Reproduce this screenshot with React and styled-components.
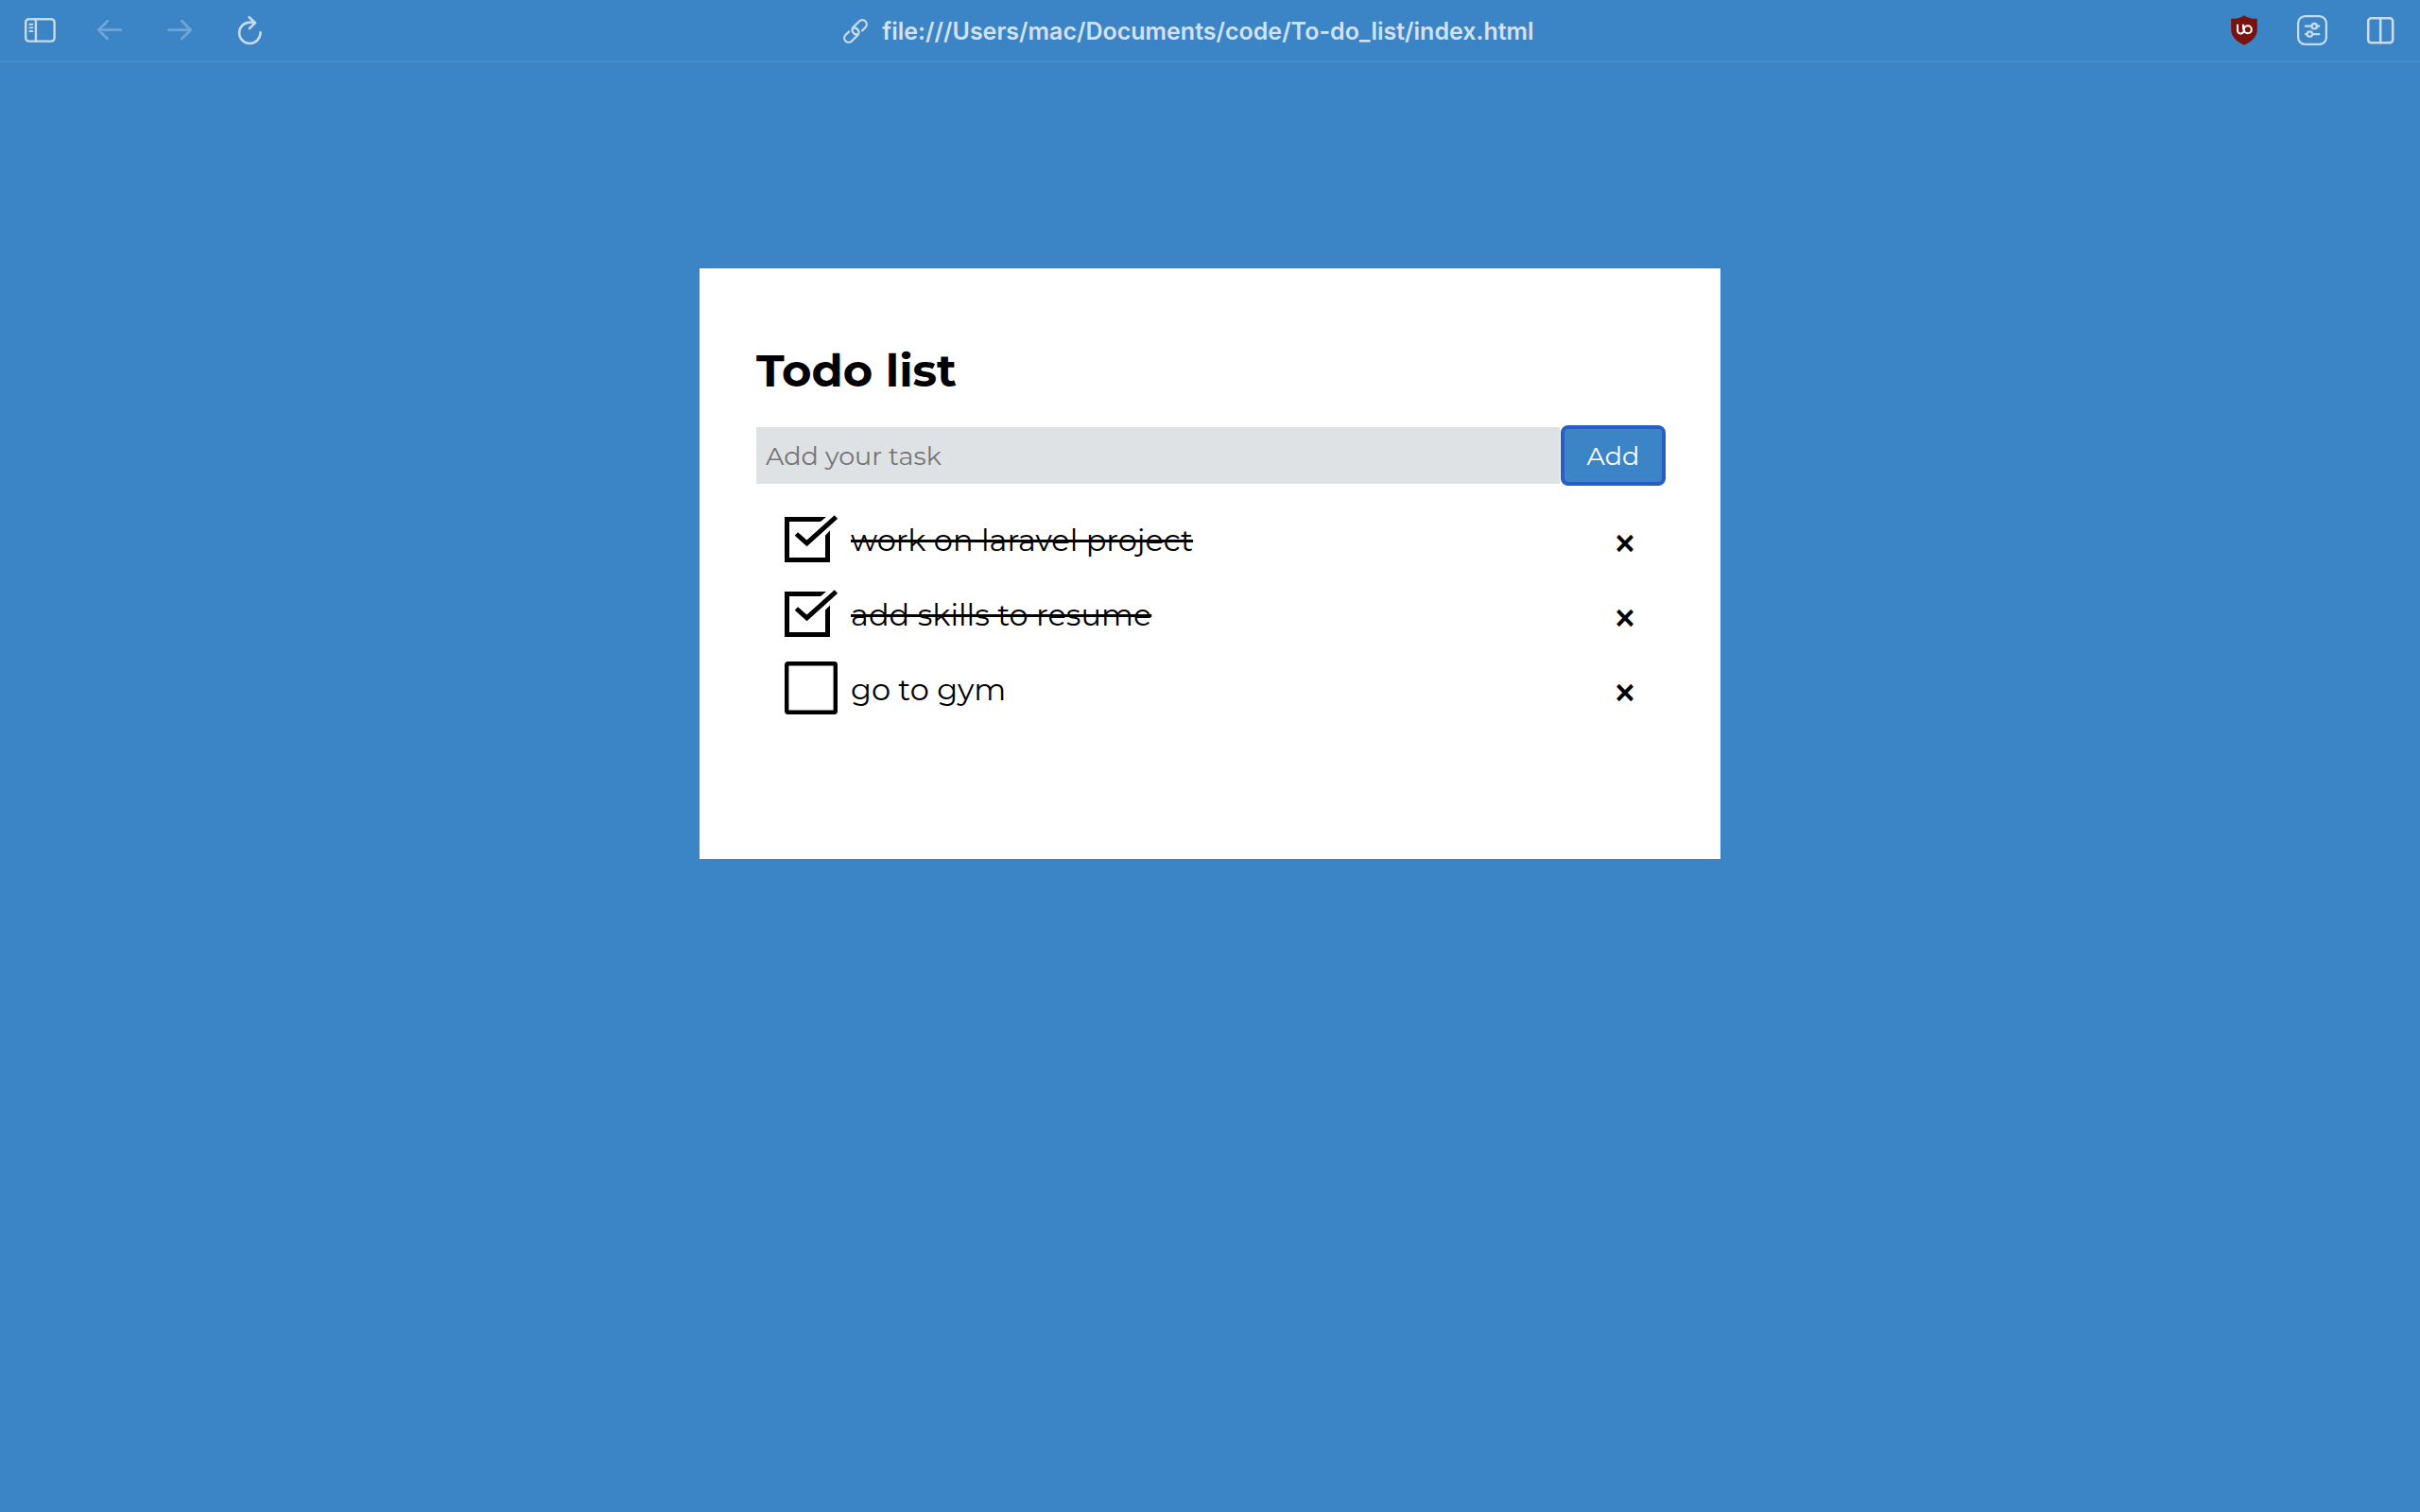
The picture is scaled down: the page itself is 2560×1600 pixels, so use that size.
import React, { useState } from "react";
import styled, { createGlobalStyle } from "styled-components";

const blue = "#3b85c6";

const GlobalStyle = createGlobalStyle`
  * { box-sizing: border-box; }
  body {
    margin: 0;
    background: ${blue};
    font-family: Montserrat, Inter, "Open Sans", sans-serif;
    color: #000;
  }
  button, input { font: inherit; color: inherit; }
`;

const Toolbar = styled.header`
  display: grid;
  grid-template-columns: 1fr auto 1fr;
  align-items: center;
  height: 66px;
  padding: 0 18px;
  border-bottom: 2px solid #478bc8;
  color: #c6dbee;
`;

const ToolGroup = styled.div`
  display: flex;
  gap: ${(p) => p.$gap}px;
  justify-content: ${(p) => (p.$end ? "flex-end" : "flex-start")};
`;

const ToolButton = styled.button`
  width: 48px;
  height: 48px;
  padding: 0;
  border: 0;
  background: none;
  color: ${(p) => (p.disabled ? "#6ea4d6" : "#c6dbee")};

  svg { display: block; }
`;

const Address = styled.button`
  display: flex;
  align-items: center;
  gap: 14px;
  padding: 2px 46px 0 0;
  border: 0;
  background: none;
  color: #d3e2f2;
  font-family: Inter, "Liberation Sans", sans-serif;
  font-size: 25px;
  font-weight: 600;
  line-height: 32px;
  white-space: nowrap;
`;

const Page = styled.main`
  padding: 218px 24px 80px;
`;

const Card = styled.section`
  max-width: 1080px;
  margin: 0 auto;
  padding: 80px 60px 142px;
  background: #fff;
`;

const Title = styled.h1`
  margin: 0 0 32px;
  font-size: 48px;
  font-weight: 700;
  line-height: 56px;
`;

const TaskForm = styled.form`
  display: flex;
  gap: 3px;
  margin-bottom: 18px;
`;

const TaskInput = styled.input`
  flex: 1;
  min-width: 0;
  height: 60px;
  padding: 0 10px;
  border: 0;
  border-radius: 0;
  outline: 0;
  background: #dee2e5;
  font-size: 27px;

  &::placeholder { color: #757575; opacity: 1; }
`;

const AddButton = styled.button`
  width: 107px;
  height: 60px;
  padding: 0;
  border: 0;
  border-radius: 6px;
  outline: 4px solid #285cc7;
  outline-offset: -2px;
  background: ${blue};
  color: #fff;
  font-size: 27px;
`;

const TaskList = styled.ul`
  margin: 0;
  padding: 0 24px 0 30px;
  list-style: none;
`;

const TaskRow = styled.li`
  display: flex;
  align-items: center;
  justify-content: space-between;
  padding: 12px 0 11px;
`;

const TaskLabel = styled.label`
  display: flex;
  align-items: center;
  gap: 14px;
  font-size: 32px;
  line-height: 40px;
`;

const TickBox = styled.span`
  display: grid;

  input, svg { grid-area: 1 / 1; display: block; }
  input {
    appearance: none;
    width: 56px;
    height: 56px;
    margin: 0;
  }
  svg { pointer-events: none; }
`;

const TaskText = styled.span`
  padding-top: 4px;
  text-decoration: ${(p) => (p.$done ? "line-through 3px" : "none")};
  text-decoration-skip-ink: none;
`;

const DeleteButton = styled.button`
  width: 34px;
  padding: 10px 0 0;
  border: 0;
  background: none;
  font-size: 48px;
  font-weight: 500;
  line-height: 40px;
`;

function Icon({ children, width = 2.4 }) {
  return (
    <svg width="48" height="48" viewBox="0 0 48 48" fill="none" stroke="currentColor"
      strokeWidth={width} strokeLinecap="round" strokeLinejoin="round" aria-hidden="true">
      {children}
    </svg>
  );
}

const SidebarIcon = () => (
  <Icon width={2.4}>
    <rect x="9.2" y="12.2" width="30.4" height="23.4" rx="3.4" />
    <path d="M19.9 12.2V35.6" />
    <path d="M13.4 17.7H16.4M13.4 21.4H16.4M13.4 25H16.4" strokeWidth="1.9" />
  </Icon>
);
const BackIcon = () => (
  <Icon width={2.8}><path d="M35.6 23.7H12.3M21.7 14.2L12.3 23.7L21.7 33" /></Icon>
);
const ForwardIcon = () => (
  <Icon width={2.8}><path d="M12.4 23.7H35.7M26.3 14.2L35.7 23.7L26.3 33" /></Icon>
);
const ReloadIcon = () => (
  <Icon width={2.6}>
    <path d="M35.5 26.4A11.2 11.2 0 1 1 24.3 15.6C26.5 15.5 28.4 15.7 29.8 16.1" />
    <path d="M23.6 10.2L29.9 16.1L23.9 22.2" />
  </Icon>
);
const ShieldIcon = () => (
  <Icon width={2}>
    <path d="M24 8.2C20.2 11 15.4 12 10.2 11.8V23C10.2 31.4 16.2 36 24 39.8C31.8 36 37.8 31.4 37.8 23V11.8C32.6 12 27.8 11 24 8.2Z" fill="#7a130f" stroke="none" />
    <g stroke="#fff" strokeLinecap="butt">
      <path d="M17 17.8V23.6A3.3 3.4 0 0 0 23.6 24.6" />
      <path d="M23 17.8V23.4" />
      <circle cx="27.8" cy="23.2" r="4" />
    </g>
  </Icon>
);
const SettingsIcon = () => (
  <Icon width={2.3}>
    <rect x="9.1" y="9.1" width="29.8" height="29.8" rx="7.4" />
    <circle cx="26.3" cy="19.7" r="2.7" />
    <circle cx="21.4" cy="28.1" r="2.7" />
    <path d="M16.9 19.7H23.6M29 19.7H31.3M16.9 28.1H18.7M24.1 28.1H31.3" />
  </Icon>
);
const SplitIcon = () => (
  <Icon width={2.6}>
    <rect x="11.2" y="11.2" width="26" height="26" rx="3.2" />
    <path d="M24.2 11.2V37.2" />
  </Icon>
);
const LinkIcon = () => (
  <svg width="28" height="28" viewBox="-14 -14 28 28" fill="none" stroke="#c6dbee"
    strokeWidth="2.3" strokeLinecap="round" aria-hidden="true">
    <g transform="rotate(-45)">
      <path d="M5.4 4.6H10.2A4.6 4.6 0 0 0 10.2 -4.6H1.6A4.6 4.6 0 0 0 -0.6 4" />
      <path d="M-5.4 -4.6H-10.2A4.6 4.6 0 0 0 -10.2 4.6H-1.6A4.6 4.6 0 0 0 0.6 -4" />
    </g>
  </svg>
);

function BoxDrawing({ done }) {
  return (
    <svg width="56" height="56" viewBox="0 0 56 56" fill="none" aria-hidden="true">
      {done ? (
        <>
          <path d="M0 5H44L38 10H5V48H43V24.5L48 19.5V53H0Z" fill="#000" />
          <path d="M12.4 23L23.5 32.8L54.4 5" stroke="#000" strokeWidth="5" />
        </>
      ) : (
        <rect x="2.2" y="2.2" width="51.6" height="51.6" rx="1.2" stroke="#000" strokeWidth="4.4" />
      )}
    </svg>
  );
}

const initialTasks = [
  { id: 1, text: "work on laravel project", done: true },
  { id: 2, text: "add skills to resume", done: true },
  { id: 3, text: "go to gym", done: false },
];

export default function App() {
  const [tasks, setTasks] = useState(initialTasks);
  const [draft, setDraft] = useState("");

  const addTask = (event) => {
    event.preventDefault();
    if (!draft.trim()) return;
    setTasks([...tasks, { id: Date.now(), text: draft.trim(), done: false }]);
    setDraft("");
  };
  const toggle = (id) =>
    setTasks(tasks.map((t) => (t.id === id ? { ...t, done: !t.done } : t)));
  const remove = (id) => setTasks(tasks.filter((t) => t.id !== id));

  return (
    <>
      <GlobalStyle />
      <Toolbar>
        <ToolGroup $gap={26}>
          <ToolButton aria-label="Sidebar"><SidebarIcon /></ToolButton>
          <ToolButton aria-label="Back" disabled><BackIcon /></ToolButton>
          <ToolButton aria-label="Forward" disabled><ForwardIcon /></ToolButton>
          <ToolButton aria-label="Reload"><ReloadIcon /></ToolButton>
        </ToolGroup>
        <Address>
          <LinkIcon />
          file:///Users/mac/Documents/code/To-do_list/index.html
        </Address>
        <ToolGroup $gap={24} $end>
          <ToolButton aria-label="Content blocker"><ShieldIcon /></ToolButton>
          <ToolButton aria-label="Page settings"><SettingsIcon /></ToolButton>
          <ToolButton aria-label="Split view"><SplitIcon /></ToolButton>
        </ToolGroup>
      </Toolbar>
      <Page>
        <Card>
          <Title>Todo list</Title>
          <TaskForm onSubmit={addTask}>
            <TaskInput
              aria-label="Add your task"
              placeholder="Add your task"
              value={draft}
              onChange={(e) => setDraft(e.target.value)}
            />
            <AddButton type="submit">Add</AddButton>
          </TaskForm>
          <TaskList>
            {tasks.map((task) => (
              <TaskRow key={task.id}>
                <TaskLabel>
                  <TickBox>
                    <input type="checkbox" checked={task.done} onChange={() => toggle(task.id)} />
                    <BoxDrawing done={task.done} />
                  </TickBox>
                  <TaskText $done={task.done}>{task.text}</TaskText>
                </TaskLabel>
                <DeleteButton aria-label={"Delete " + task.text} onClick={() => remove(task.id)}>×</DeleteButton>
              </TaskRow>
            ))}
          </TaskList>
        </Card>
      </Page>
    </>
  );
}
